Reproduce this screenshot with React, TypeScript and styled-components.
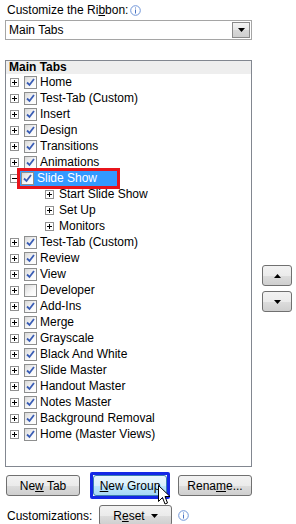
import React from 'react'
import styled, { createGlobalStyle } from 'styled-components'

const GlobalStyle = createGlobalStyle`
  html, body {
    margin: 0;
    padding: 0;
    background: #ffffff;
  }
  body {
    font-family: 'Liberation Sans', Arial, sans-serif;
    font-size: 12px;
    color: #000000;
  }
`

const Page = styled.div`
  position: relative;
  width: 296px;
  height: 524px;
  padding-left: 5px;
  box-sizing: border-box;
`

const Caption = styled.div`
  display: flex;
  align-items: center;
  height: 20px;
  padding-left: 2px;
  gap: 2px;
`

const Combo = styled.div`
  display: flex;
  align-items: center;
  width: 247px;
  height: 20px;
  box-sizing: border-box;
  border: 1px solid #a5a5a5;
  padding-left: 3px;
`

const ComboText = styled.span`
  flex: 1;
`

const ComboButton = styled.div`
  width: 18px;
  height: 16px;
  margin-right: 1px;
  box-sizing: border-box;
  border: 1px solid #8a8a8a;
  background: linear-gradient(#f4f4f4, #e6e6e6 50%, #d8d8d8 51%, #cfcfcf);
  display: flex;
  align-items: center;
  justify-content: center;
`

const Body = styled.div`
  display: flex;
  margin-top: 20px;
`

const LeftCol = styled.div`
  width: 247px;
`

const ListBox = styled.div`
  height: 407px;
  box-sizing: border-box;
  border: 1px solid #828790;
  overflow: hidden;
`

const Header = styled.div`
  height: 13px;
  line-height: 13px;
  padding-left: 3px;
  font-weight: bold;
  background: #eeeeee;
`

const Row = styled.div<{ $depth?: number }>`
  display: flex;
  align-items: center;
  height: 16px;
  padding-left: ${p => (p.$depth ? 39 : 4)}px;
`

const Expander = styled.span`
  position: relative;
  width: 9px;
  height: 9px;
  box-sizing: border-box;
  border: 1px solid #919191;
  background: #ffffff;
  flex: none;
`

const ExpanderBar = styled.span<{ $vertical?: boolean }>`
  position: absolute;
  background: #000000;
  left: ${p => (p.$vertical ? 3 : 1)}px;
  top: ${p => (p.$vertical ? 1 : 3)}px;
  width: ${p => (p.$vertical ? 1 : 5)}px;
  height: ${p => (p.$vertical ? 5 : 1)}px;
`

const Box = styled.span<{ $gap?: number }>`
  width: 13px;
  height: 13px;
  margin-left: ${p => p.$gap ?? 0}px;
  box-sizing: border-box;
  border: 1px solid #8e8f8f;
  background: linear-gradient(135deg, #d8d8d8, #f8f8f8 60%, #ffffff);
  display: flex;
  align-items: center;
  justify-content: center;
  flex: none;
`

const Label = styled.span<{ $child?: boolean }>`
  margin-left: ${p => (p.$child ? 5 : 3)}px;
  white-space: nowrap;
`

const Selection = styled.span`
  position: relative;
  display: flex;
  align-items: center;
  height: 16px;
  margin-left: 1px;
  padding: 0 20px 0 1px;
  background: #3399ff;
  color: #ffffff;

  &::after {
    content: '';
    position: absolute;
    left: -3px;
    right: -3px;
    top: -2px;
    bottom: -3px;
    border: 3px solid #e8141b;
  }
`

const ButtonRow = styled.div`
  display: flex;
  align-items: center;
  margin-top: 5px;
  padding-left: 1px;
`

const Button = styled.div<{ $width: number; $hot?: boolean }>`
  width: ${p => p.$width}px;
  height: 21px;
  box-sizing: border-box;
  border: 1px solid ${p => (p.$hot ? '#3c7fb1' : '#707070')};
  border-radius: 3px;
  background: ${p =>
    p.$hot
      ? 'linear-gradient(#eaf6fd, #d9f0fc 50%, #bee6fd 51%, #a7d9f5)'
      : 'linear-gradient(#f2f2f2, #ebebeb 50%, #dddddd 51%, #cfcfcf)'};
  display: flex;
  align-items: center;
  justify-content: center;
  gap: 6px;
  flex: none;
  white-space: nowrap;
`

const FocusRing = styled.div`
  border: 3px solid #1428e6;
  border-radius: 2px;
  margin: 0 8px 0 10px;
`

const BottomRow = styled.div`
  display: flex;
  align-items: center;
  margin-top: 6px;
  padding-left: 2px;
`

const BottomLabel = styled.span`
  width: 92px;
`

const InfoSlot = styled.span`
  display: flex;
  margin-left: 6px;
`

const RightCol = styled.div`
  display: flex;
  flex-direction: column;
  gap: 5px;
  padding: 205px 0 0 10px;
`

const Cursor = styled.svg`
  position: absolute;
  left: 158px;
  top: 485px;
`

const Check = () => (
  <svg width='9' height='9' viewBox='0 0 9 9'>
    <path d='M1 4.5 L3.5 7 L8 1' fill='none' stroke='#3a5db5' strokeWidth='1.8' />
  </svg>
)

const Info = () => (
  <svg width='11' height='11' viewBox='0 0 11 11'>
    <circle cx='5.5' cy='5.5' r='4.8' fill='#ffffff' stroke='#6f95d8' strokeWidth='1' />
    <rect x='5' y='2.5' width='1' height='1' fill='#4a74c4' />
    <rect x='5' y='4.5' width='1' height='4' fill='#4a74c4' />
  </svg>
)

const Arrow = ({ up }: { up?: boolean }) => (
  <svg width='7' height='4' viewBox='0 0 7 4'>
    <path d={up ? 'M0 4 L3.5 0 L7 4 Z' : 'M0 0 L7 0 L3.5 4 Z'} fill='#000000' />
  </svg>
)

const Plus = ({ open }: { open?: boolean }) => (
  <Expander>
    <ExpanderBar />
    {!open && <ExpanderBar $vertical />}
  </Expander>
)

const tabsBefore = ['Home', 'Test-Tab (Custom)', 'Insert', 'Design', 'Transitions', 'Animations']
const groups = ['Start Slide Show', 'Set Up', 'Monitors']
const tabsAfter: [string, boolean][] = [
  ['Test-Tab (Custom)', true],
  ['Review', true],
  ['View', true],
  ['Developer', false],
  ['Add-Ins', true],
  ['Merge', true],
  ['Grayscale', true],
  ['Black And White', true],
  ['Slide Master', true],
  ['Handout Master', true],
  ['Notes Master', true],
  ['Background Removal', true],
  ['Home (Master Views)', true],
]

const TabRow = ({ name, checked = true }: { name: string; checked?: boolean }) => (
  <Row>
    <Plus />
    <Box $gap={5}>{checked && <Check />}</Box>
    <Label>{name}</Label>
  </Row>
)

export default function App() {
  return (
    <Page>
      <GlobalStyle />
      <Caption>
        <span>Customize the Ri<u>b</u>bon:</span>
        <Info />
      </Caption>
      <Combo>
        <ComboText>Main Tabs</ComboText>
        <ComboButton>
          <Arrow />
        </ComboButton>
      </Combo>

      <Body>
        <LeftCol>
          <ListBox>
            <Header>Main Tabs</Header>
            {tabsBefore.map((t, i) => <TabRow key={i} name={t} />)}
            <Row>
              <Plus open />
              <Selection>
                <Box><Check /></Box>
                <Label>Slide Show</Label>
              </Selection>
            </Row>
            {groups.map(g => (
              <Row key={g} $depth={1}>
                <Plus />
                <Label $child>{g}</Label>
              </Row>
            ))}
            {tabsAfter.map(([t, c], i) => <TabRow key={i} name={t} checked={c} />)}
          </ListBox>

          <ButtonRow>
            <Button $width={74}><span>Ne<u>w</u> Tab</span></Button>
            <FocusRing>
              <Button $width={74} $hot><span><u>N</u>ew Group</span></Button>
            </FocusRing>
            <Button $width={74}><span>Rena<u>m</u>e...</span></Button>
          </ButtonRow>

          <BottomRow>
            <BottomLabel>Customizations:</BottomLabel>
            <Button $width={73}>
              <span>R<u>e</u>set</span>
              <Arrow />
            </Button>
            <InfoSlot><Info /></InfoSlot>
          </BottomRow>
        </LeftCol>

        <RightCol>
          <Button $width={30}><Arrow up /></Button>
          <Button $width={30}><Arrow /></Button>
        </RightCol>
      </Body>

      <Cursor width='13' height='21' viewBox='0 0 13 21'>
        <path d='M0.5 0.5 L0.5 16.5 L4.5 12.5 L7 19 L9.5 18 L7 11.5 L12 11.5 Z' fill='#ffffff' stroke='#000000' strokeWidth='1' />
      </Cursor>
    </Page>
  )
}
